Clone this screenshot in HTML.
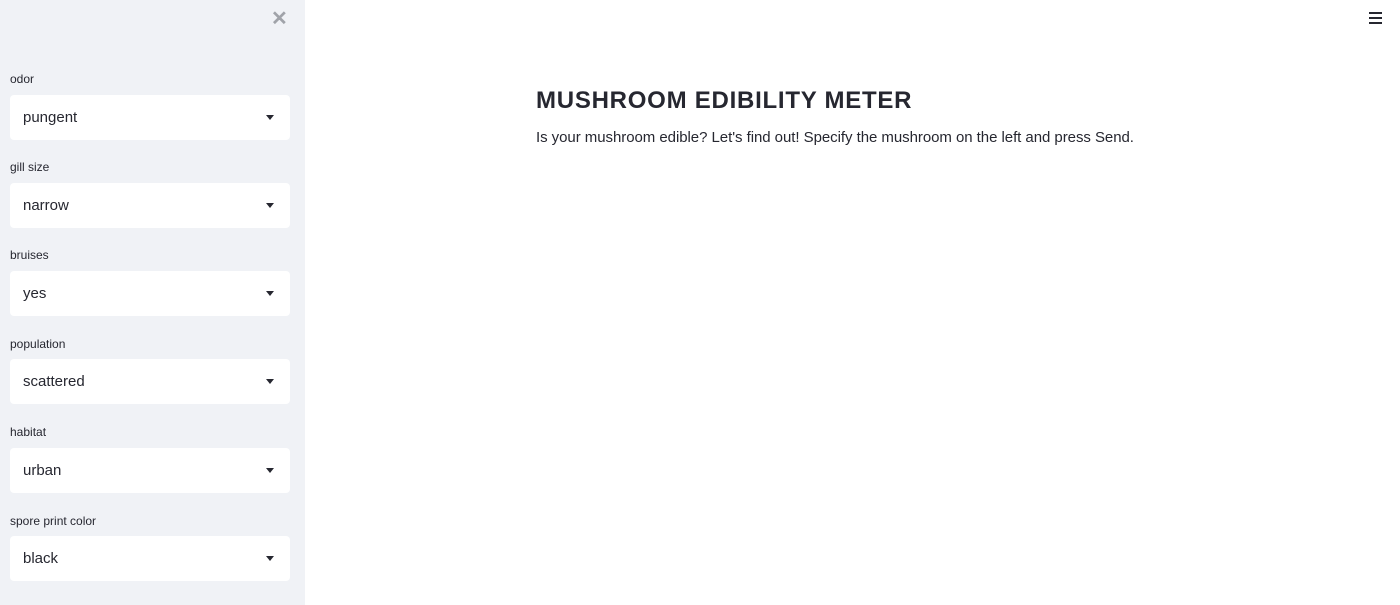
<!DOCTYPE html><html><head><style>
body{margin:0;width:1400px;height:605px;overflow:hidden;font-family:"Liberation Sans",sans-serif;background:#fff;position:relative}
.sb{position:absolute;left:0;top:0;width:305px;height:605px;background:#f0f2f6}
.x{position:absolute;left:271px;top:6px;font-size:20px;color:#a0a3a9;font-weight:bold}
.lab{position:absolute;left:10px;font-size:12px;color:#262730}
.sel{position:absolute;left:10px;width:280px;height:45px;background:#fff;border-radius:4px}
.sel span{position:absolute;left:13px;top:14px;font-size:15px;color:#262730}
.sel i{position:absolute;right:16px;top:20px;border-left:4px solid transparent;border-right:4px solid transparent;border-top:5px solid #262730}
h1{position:absolute;left:536px;top:87px;margin:0;font-size:24px;font-weight:bold;color:#262730;letter-spacing:.75px}
p{position:absolute;left:536px;top:129px;margin:0;font-size:15px;color:#262730;letter-spacing:-.05px}
.hm{position:absolute;left:1369px;top:12px;width:13px}
.hm div{height:2px;background:#262730;margin-bottom:3px}
</style></head><body>
<div class="sb"><div class="x">✕</div>
<div class="lab" style="top:72px">odor</div><div class="sel" style="top:95px"><span>pungent</span><i></i></div>
<div class="lab" style="top:160px">gill size</div><div class="sel" style="top:183px"><span>narrow</span><i></i></div>
<div class="lab" style="top:248px">bruises</div><div class="sel" style="top:271px"><span>yes</span><i></i></div>
<div class="lab" style="top:337px">population</div><div class="sel" style="top:359px"><span>scattered</span><i></i></div>
<div class="lab" style="top:425px">habitat</div><div class="sel" style="top:448px"><span>urban</span><i></i></div>
<div class="lab" style="top:514px">spore print color</div><div class="sel" style="top:536px"><span>black</span><i></i></div>
</div>
<h1>MUSHROOM EDIBILITY METER</h1>
<p>Is your mushroom edible? Let's find out! Specify the mushroom on the left and press Send.</p>
<div class="hm"><div></div><div></div><div></div></div>
</body></html>
